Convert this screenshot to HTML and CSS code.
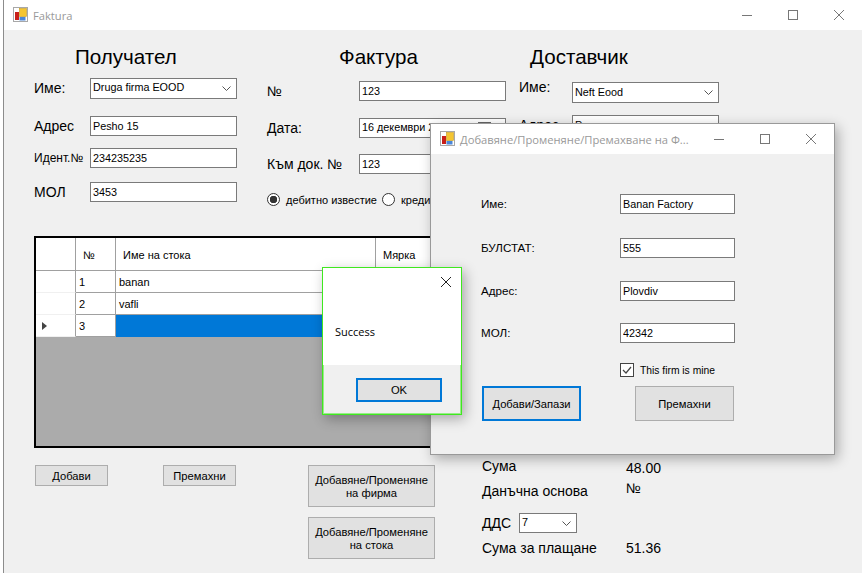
FILE: index.html
```html
<!DOCTYPE html>
<html lang="en">
<head>
  <meta charset="UTF-8" />
  <title>Faktura</title>
  <link rel="stylesheet" href="styles.css">
</head>
<body>

  <div class="desk">

    <!-- Main form -->
    <div class="main-win">
      <div class="titlebar">
        <svg class="app-icon" width="16" height="16" viewBox="0 0 16 16">
          <rect x="0.5" y="0.5" width="14" height="14" fill="#fff" stroke="#a8a8a8"/>
          <rect x="2" y="5" width="4" height="8" fill="#c8201a"/>
          <rect x="6.5" y="1.5" width="7" height="8" fill="#f4c531" stroke="#c49a1e" stroke-width="0.6"/>
          <rect x="6.5" y="10" width="6" height="3.5" fill="#4a86d8"/>
        </svg>
        <span class="title-text">Faktura</span>
        <div class="win-controls">
          <span class="win-btn"><svg width="12" height="12" viewBox="0 0 12 12"><path d="M1 6.5h10" stroke="#777" fill="none"/></svg></span>
          <span class="win-btn"><svg width="12" height="12" viewBox="0 0 12 12"><rect x="1.5" y="1.5" width="9" height="9" stroke="#777" fill="none"/></svg></span>
          <span class="win-btn"><svg width="12" height="12" viewBox="0 0 12 12"><path d="M1 1l10 10M11 1L1 11" stroke="#777" fill="none"/></svg></span>
        </div>
      </div>

      <div class="main-body">
        <div class="top-row">

          <!-- Получател -->
          <section class="col col-client">
            <h2 class="col-title">Получател</h2>
            <label class="lbl">Име:</label>
            <div class="combo">Druga firma EOOD
              <svg class="chevron" width="9" height="5" viewBox="0 0 9 5"><path d="M0.5 0.5l4 4 4-4" stroke="#555" fill="none"/></svg>
            </div>
            <label class="lbl">Адрес</label>
            <input class="txt" type="text" value="Pesho 15" />
            <label class="lbl lbl-small">Идент.№</label>
            <input class="txt" type="text" value="234235235" />
            <label class="lbl">МОЛ</label>
            <input class="txt" type="text" value="3453" />
          </section>

          <!-- Фактура -->
          <section class="col col-invoice">
            <h2 class="col-title">Фактура</h2>
            <label class="lbl">№</label>
            <input class="txt" type="text" value="123" />
            <label class="lbl">Дата:</label>
            <div class="combo date-box">16 декември 2018 г.
              <svg class="cal" width="13" height="12" viewBox="0 0 13 12"><rect x="0.5" y="0.5" width="12" height="11" fill="#fff" stroke="#666"/><path d="M0.5 3h12" stroke="#666"/></svg>
            </div>
            <label class="lbl">Към док. №</label>
            <input class="txt" type="text" value="123" />
            <div class="radio-row">
              <input class="radio" type="radio" name="kind" checked />
              <span class="radio-text">дебитно известие</span>
              <input class="radio" type="radio" name="kind" />
              <span class="radio-text">кредитно известие</span>
            </div>
          </section>

          <!-- Доставчик -->
          <section class="col col-supplier">
            <h2 class="col-title">Доставчик</h2>
            <label class="lbl">Име:</label>
            <div class="combo">Neft Eood
              <svg class="chevron" width="9" height="5" viewBox="0 0 9 5"><path d="M0.5 0.5l4 4 4-4" stroke="#555" fill="none"/></svg>
            </div>
            <label class="lbl">Адрес</label>
            <input class="txt" type="text" value="Рос" />
          </section>
        </div>

        <!-- Items grid -->
        <div class="items-wrap">
          <table class="items">
            <colgroup>
              <col class="c-head"><col class="c-no"><col class="c-name"><col class="c-unit">
            </colgroup>
            <thead>
              <tr>
                <th></th>
                <th>№</th>
                <th>Име на стока</th>
                <th>Мярка</th>
              </tr>
            </thead>
            <tbody>
              <tr><td class="rowhead"></td><td>1</td><td>banan</td><td></td></tr>
              <tr><td class="rowhead"></td><td>2</td><td>vafli</td><td></td></tr>
              <tr>
                <td class="rowhead"><span class="row-arrow"></span></td>
                <td>3</td><td class="sel"></td><td class="sel"></td>
              </tr>
            </tbody>
          </table>
        </div>

        <div class="bottom-row">
          <div class="item-btns">
            <button class="btn btn-small">Добави</button>
            <button class="btn btn-small">Премахни</button>
          </div>
          <div class="manage-btns">
            <button class="btn btn-manage">Добавяне/Променяне<br>на фирма</button>
            <button class="btn btn-manage">Добавяне/Променяне<br>на стока</button>
          </div>
          <div class="totals">
            <div class="total-row tr-sum"><span class="total-label">Сума</span><span class="total-val">48.00</span></div>
            <div class="total-row tr-base"><span class="total-label">Данъчна основа</span><span class="total-val val-up">№</span></div>
            <div class="total-row tr-vat">
              <span class="vat-label">ДДС</span>
              <div class="combo combo-vat">7
                <svg class="chevron" width="9" height="5" viewBox="0 0 9 5"><path d="M0.5 0.5l4 4 4-4" stroke="#555" fill="none"/></svg>
              </div>
            </div>
            <div class="total-row tr-pay"><span class="total-label">Сума за плащане</span><span class="total-val">51.36</span></div>
          </div>
        </div>
      </div>
    </div>

    <!-- Firm dialog -->
    <div class="firm-win">
      <div class="titlebar">
        <svg class="app-icon" width="16" height="16" viewBox="0 0 16 16">
          <rect x="0.5" y="0.5" width="14" height="14" fill="#fff" stroke="#a8a8a8"/>
          <rect x="2" y="5" width="4" height="8" fill="#c8201a"/>
          <rect x="6.5" y="1.5" width="7" height="8" fill="#f4c531" stroke="#c49a1e" stroke-width="0.6"/>
          <rect x="6.5" y="10" width="6" height="3.5" fill="#4a86d8"/>
        </svg>
        <span class="title-text">Добавяне/Променяне/Премахване на Ф...</span>
        <div class="win-controls">
          <span class="win-btn"><svg width="12" height="12" viewBox="0 0 12 12"><path d="M1 6.5h10" stroke="#777" fill="none"/></svg></span>
          <span class="win-btn"><svg width="12" height="12" viewBox="0 0 12 12"><rect x="1.5" y="1.5" width="9" height="9" stroke="#777" fill="none"/></svg></span>
          <span class="win-btn"><svg width="12" height="12" viewBox="0 0 12 12"><path d="M1 1l10 10M11 1L1 11" stroke="#777" fill="none"/></svg></span>
        </div>
      </div>
      <div class="firm-body">
        <div class="firm-fields">
          <label class="firm-lbl">Име:</label>
          <input class="txt" type="text" value="Banan Factory" />
          <label class="firm-lbl">БУЛСТАТ:</label>
          <input class="txt" type="text" value="555" />
          <label class="firm-lbl">Адрес:</label>
          <input class="txt" type="text" value="Plovdiv" />
          <label class="firm-lbl">МОЛ:</label>
          <input class="txt" type="text" value="42342" />
          <div class="mine-row">
            <svg width="14" height="14" viewBox="0 0 14 14"><rect x="0.5" y="0.5" width="13" height="13" fill="#fff" stroke="#444"/><path d="M3 7l3 3 5-6" stroke="#444" stroke-width="1.2" fill="none"/></svg>
            <span class="mine-text">This firm is mine</span>
          </div>
        </div>
        <div class="firm-btns">
          <button class="btn btn-firm btn-focus">Добави/Запази</button>
          <button class="btn btn-firm">Премахни</button>
        </div>
      </div>
    </div>

    <!-- Message box -->
    <div class="msg-win">
      <div class="msg-top">
        <svg class="msg-close" width="14" height="14" viewBox="0 0 14 14"><path d="M2 2l10 10M12 2L2 12" stroke="#222" fill="none"/></svg>
        <span class="msg-text">Success</span>
      </div>
      <div class="msg-foot">
        <button class="btn btn-ok btn-focus">OK</button>
      </div>
    </div>

  </div>

</body>
</html>
```

FILE: styles.css
```css
* {
  box-sizing: border-box;
}

html, body {
  margin: 0;
  padding: 0;
}

body {
  font-family: "Liberation Sans", Arial, sans-serif;
  font-size: 12px;
  color: #000;
  background: #fff;
}

.desk {
  position: relative;
  width: 862px;
  height: 573px;
  overflow: hidden;
  background: #fff;
}

/* windows */
.main-win {
  position: absolute;
  left: 3px;
  top: 0;
  width: 859px;
  height: 573px;
  border-left: 1px solid #8c8c8c;
  background: #f0f0f0;
}

.firm-win {
  position: absolute;
  left: 430px;
  top: 123px;
  width: 405px;
  height: 332px;
  background: #f0f0f0;
  border: 1px solid #999;
  box-shadow: 3px 4px 12px rgba(0, 0, 0, 0.3);
}

.msg-win {
  position: absolute;
  left: 322px;
  top: 267px;
  width: 140px;
  height: 148px;
  display: flex;
  flex-direction: column;
  background: #f0f0f0;
  border: 1px solid #3fe81f;
  outline: 1px solid rgba(63, 232, 31, 0.5);
  outline-offset: -2px;
  box-shadow: 3px 4px 12px rgba(0, 0, 0, 0.3);
}

.titlebar {
  display: flex;
  align-items: center;
  height: 30px;
  padding-left: 9px;
  background: #fff;
}

.app-icon {
  flex: none;
  margin-right: 4px;
}

.title-text {
  font-family: "Open Sans", sans-serif;
  font-size: 11.2px;
  color: #999;
  white-space: nowrap;
}

.win-controls {
  display: flex;
  flex: none;
  margin-left: auto;
}

.win-btn {
  display: flex;
  align-items: center;
  justify-content: center;
  width: 46px;
  height: 30px;
}

/* top columns */
.top-row {
  display: flex;
  height: 206px;
}

.col {
  display: grid;
  align-content: start;
  align-items: start;
}

.col-title {
  grid-column: 1 / -1;
  margin: 0;
  padding-top: 15px;
  font-size: 20.6px;
  font-weight: normal;
  line-height: 24px;
}

.col-client {
  grid-template-columns: 56px 147px;
  grid-template-rows: 48px 38px 32px 34px 20px;
  width: 203px;
  margin-left: 30px;
}

.col-client .col-title { margin-left: 41px; }

.col-invoice {
  grid-template-columns: 92px 147px;
  grid-template-rows: 51px 37px 36px 20px;
  width: 239px;
  margin-left: 30px;
}

.col-invoice .col-title { margin-left: 72px; }

.col-supplier {
  grid-template-columns: 53px 147px;
  grid-template-rows: 52px 33px 20px;
  width: 200px;
  height: 93px;
  margin-left: 13px;
  overflow: hidden;
}

.col-supplier .col-title { margin-left: 11px; }
.col-supplier .lbl:first-of-type { margin-top: -5px; }
.col-supplier .combo { padding-top: 1px; }

.lbl {
  font-size: 14px;
  line-height: 20px;
}

.lbl-small {
  font-size: 12px;
}

.txt, .combo {
  width: 100%;
  height: 20px;
  padding: 0 2px;
  border: 1px solid #7a7a7a;
  border-radius: 0;
  background: #fff;
  font-family: "Liberation Sans", Arial, sans-serif;
  font-size: 10.8px;
  color: #000;
  outline: none;
}

.combo {
  position: relative;
  height: 21px;
  line-height: 17px;
  white-space: nowrap;
  overflow: hidden;
}

.chevron {
  position: absolute;
  right: 5px;
  top: 7px;
}

.date-box {
  height: 20px;
}

.cal {
  position: absolute;
  right: 14px;
  top: 3px;
}

.radio-row {
  grid-column: 1 / -1;
  display: flex;
  align-items: center;
  width: 163px;
  margin-top: 19px;
  font-size: 11px;
  white-space: nowrap;
  overflow: hidden;
}

.radio {
  appearance: none;
  flex: none;
  width: 13px;
  height: 13px;
  margin: 0;
  border: 1px solid #333;
  border-radius: 50%;
  background: #fff;
}

.radio:checked {
  background: radial-gradient(circle, #333 0 3.5px, #fff 4px);
}

.radio-text {
  margin: 0 5px 0 6px;
}

/* items grid */
.items-wrap {
  width: 640px;
  height: 212px;
  margin-left: 30px;
  border: 2px solid #000;
  background: #ababab;
  overflow: hidden;
}

.items {
  table-layout: fixed;
  width: 600px;
  border-collapse: separate;
  border-spacing: 0;
  font-size: 11px;
}

.c-head { width: 40px; }
.c-no { width: 40px; }
.c-name { width: 260px; }

.items th {
  height: 33px;
  padding: 2px 0 0 7px;
  background: #fff;
  border-right: 1px solid #a0a0a0;
  border-bottom: 1px solid #a0a0a0;
  font-weight: normal;
  text-align: left;
}

.items td {
  height: 22px;
  padding: 0 0 0 3px;
  background: #fff;
  border-right: 1px solid #a0a0a0;
  border-bottom: 1px solid #a0a0a0;
}

.items .rowhead {
  border-bottom-color: #f0f0f0;
}

.items .sel {
  background: #0078d7;
  border-color: #0078d7;
}

.row-arrow {
  display: block;
  width: 0;
  height: 0;
  margin-left: 3px;
  border-left: 5px solid #444;
  border-top: 4px solid transparent;
  border-bottom: 4px solid transparent;
}

/* bottom */
.bottom-row {
  display: flex;
  align-items: flex-start;
}

.btn {
  padding: 0;
  border: 1px solid #adadad;
  border-radius: 0;
  background: #e1e1e1;
  font-family: "Liberation Sans", Arial, sans-serif;
  font-size: 11.2px;
  color: #000;
}

.btn-focus {
  border: 2px solid #0078d7;
}

.item-btns {
  display: flex;
  gap: 55px;
  width: 201px;
  margin: 17px 0 0 31px;
}

.btn-small {
  width: 73px;
  height: 21px;
}

.manage-btns {
  display: flex;
  flex-direction: column;
  gap: 10px;
  margin: 17px 0 0 72px;
}

.btn-manage {
  width: 127px;
  height: 42px;
  padding-top: 2px;
  line-height: 13px;
}

.totals {
  margin: 10px 0 0 47px;
  font-size: 14px;
}

.total-row {
  display: flex;
  align-items: center;
}

.total-label {
  width: 144px;
}

.tr-sum { height: 20px; }
.tr-sum .total-label { margin-top: -5px; }
.tr-base { height: 25px; }
.val-up { margin-top: -6px; }
.tr-vat { height: 20px; margin-top: 10px; }
.tr-pay { height: 20px; margin-top: 5px; }

.vat-label {
  width: 37px;
}

.combo-vat {
  width: 58px;
  height: 20px;
}

/* firm dialog */
.firm-body {
  padding: 40px 0 0 50px;
}

.firm-fields {
  display: grid;
  grid-template-columns: 139px 115px;
  grid-template-rows: 44px 43px 42px 40px 14px;
  align-items: start;
}

.firm-lbl {
  font-size: 11.6px;
  line-height: 19px;
}

.mine-row {
  grid-column: 2;
  display: flex;
  align-items: center;
  gap: 6px;
  font-size: 10.3px;
  white-space: nowrap;
}

.firm-btns {
  display: flex;
  gap: 54px;
  margin: 9px 0 0 1px;
}

.btn-firm {
  width: 99px;
  height: 35px;
}

/* message box */
.msg-top {
  position: relative;
  height: 97px;
  background: #fff;
}

.msg-close {
  position: absolute;
  right: 8px;
  top: 7px;
}

.msg-text {
  position: absolute;
  left: 12px;
  top: 56px;
  font-family: "Open Sans", sans-serif;
  font-size: 11px;
}

.msg-foot {
  flex: 1;
  padding: 13px 0 0 33px;
}

.btn-ok {
  display: block;
  width: 86px;
  height: 24px;
}
```
